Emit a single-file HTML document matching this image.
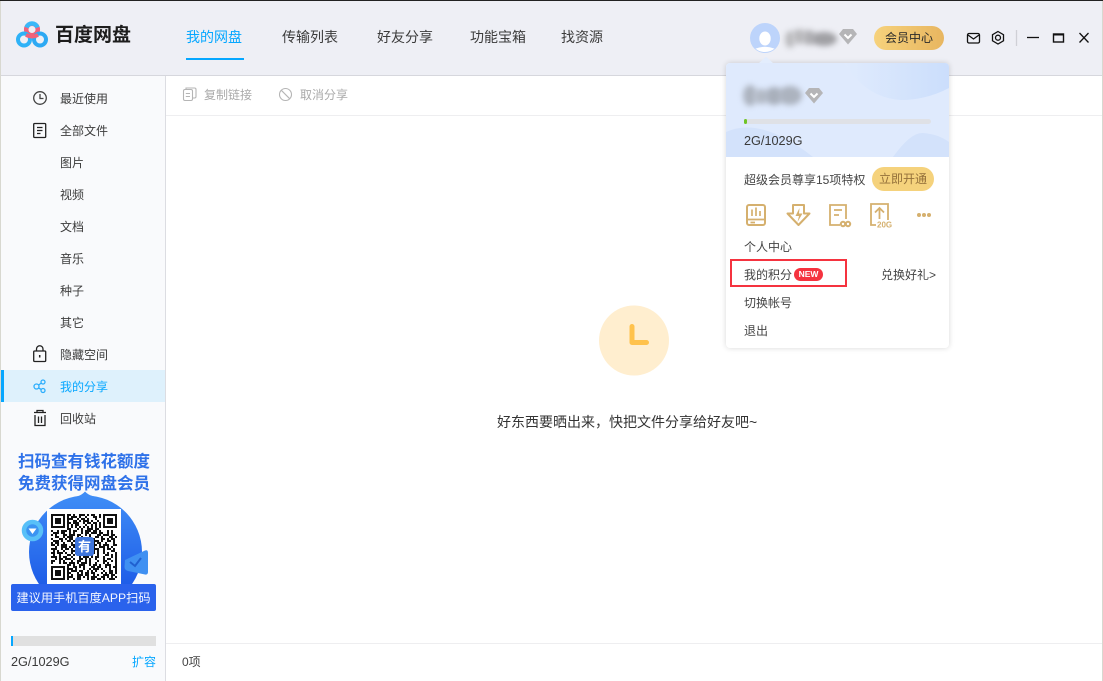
<!DOCTYPE html>
<html lang="zh"><head><meta charset="utf-8"><title>百度网盘</title>
<style>
*{box-sizing:border-box}
html,body{margin:0;padding:0;width:1103px;height:681px;overflow:hidden;background:#d8d8d0}
body{position:relative;font-family:"Liberation Sans","Noto Sans CJK SC",sans-serif;font-size:12px;color:#333}
.a{position:absolute;white-space:nowrap}
.t{position:absolute;white-space:nowrap;line-height:16px}
svg{position:absolute;overflow:visible}
.nav{position:absolute;top:28px;font-size:14px;line-height:18px;color:#3b3b3b;white-space:nowrap}
.side{position:absolute;left:60px;line-height:16px;color:#3c3c3c}
.blur{position:absolute;border-radius:50%;filter:blur(3px)}
</style></head><body>
<div class="a" style="left:1px;top:0;width:1101px;height:681px;background:#fff"></div>
<div class="a" style="left:0;top:0;width:1103px;height:1px;background:#222"></div>
<!-- header -->
<div class="a" style="left:1px;top:1px;width:1101px;height:74px;background:#eeeff5"></div>
<div class="a" style="left:1px;top:75px;width:1101px;height:1px;background:#d6d7dd"></div>
<!-- logo -->
<svg style="left:0;top:0" width="60" height="60" fill="none">
<circle cx="32" cy="29.500" r="5.800" stroke="#f2617a" stroke-width="4.500"/>
<path d="M26.500 27.500A5.800 5.800 0 0 1 37.500 27.500" stroke="#39b8f8" stroke-width="4.500"/>
<circle cx="24" cy="39.500" r="6" stroke="#2eb2f7" stroke-width="4"/>
<circle cx="40" cy="39.500" r="6" stroke="#2da9f3" stroke-width="4"/>
<path d="M26 35Q32 38 38 35" stroke="#f2617a" stroke-width="4"/>
</svg>
<div class="t" style="left:55px;top:24px;font-size:19px;line-height:24px;font-weight:700;color:#1d1d1d">百度网盘</div>
<div class="nav" style="left:186px;color:#06a7ff">我的网盘</div>
<div class="a" style="left:186px;top:58px;width:58px;height:2px;background:#06a7ff"></div>
<div class="nav" style="left:282px">传输列表</div>
<div class="nav" style="left:377px">好友分享</div>
<div class="nav" style="left:470px">功能宝箱</div>
<div class="nav" style="left:561px">找资源</div>
<!-- avatar -->
<svg style="left:750px;top:23px" width="30" height="30" viewBox="0 0 30 30">
<circle cx="15" cy="15" r="15" fill="#bdd4fb"/>
<ellipse cx="15" cy="15.500" rx="5.700" ry="7" fill="#fff"/>
<path d="M5.500 25.600Q15 22 24.500 25.600A15 15 0 0 1 5.500 25.600Z" fill="#fff"/>
</svg>
<div class="blur" style="left:785px;top:31px;width:10px;height:17px;background:#bdbdc0"></div>
<div class="blur" style="left:792px;top:29px;width:14px;height:15px;background:#bcbcbf"></div>
<div class="blur" style="left:802px;top:30px;width:14px;height:15px;background:#b3b3b7"></div>
<div class="blur" style="left:811px;top:32px;width:26px;height:14px;background:#a0a0a4"></div>
<svg style="left:839px;top:29px" width="18" height="16" viewBox="0 0 18 16">
<path d="M4 0H14L18 5 9 15.500 0 5Z" fill="#b5b5b7"/><path d="M5.500 5.500 9 9 12.500 5.500" fill="none" stroke="#fff" stroke-width="2"/>
</svg>
<div class="t" style="left:874px;top:26px;width:70px;height:24px;border-radius:12px;background:linear-gradient(90deg,#f6d27c,#e8b660);text-align:center;line-height:25px;color:#2a2a2a">会员中心</div>
<svg style="left:960px;top:25px" width="140" height="26" fill="none" stroke="#111" stroke-width="1.300">
<rect x="7.500" y="8.500" width="12" height="9.500" rx="1.500"/>
<path d="M8 10 13.500 14 19 10"/>
<path d="M38 6.500 43.500 9.700V15.800L38 19 32.500 15.800V9.700Z"/><circle cx="38" cy="12.700" r="2.500"/>
<path d="M56.500 5V21" stroke="#cfd0d6"/>
<path d="M67 12.500H79"/>
<rect x="93.500" y="9" width="10" height="8" stroke-width="1.400"/><path d="M93.500 9.500H103.500" stroke-width="2"/>
<path d="M119.500 8 128.500 17.500M128.500 8 119.500 17.500"/>
</svg>
<!-- sidebar -->
<div class="a" style="left:1px;top:76px;width:164px;height:605px;background:#f9fafc"></div>
<div class="a" style="left:165px;top:76px;width:1px;height:605px;background:#dcdde2"></div>
<div class="a" style="left:1px;top:370px;width:164px;height:32px;background:#def1fc"></div>
<div class="a" style="left:1px;top:370px;width:3px;height:32px;background:#06a7ff"></div>
<div class="side" style="top:91px">最近使用</div>
<div class="side" style="top:123px">全部文件</div>
<div class="side" style="top:155px">图片</div>
<div class="side" style="top:187px">视频</div>
<div class="side" style="top:219px">文档</div>
<div class="side" style="top:251px">音乐</div>
<div class="side" style="top:283px">种子</div>
<div class="side" style="top:315px">其它</div>
<div class="side" style="top:347px">隐藏空间</div>
<div class="side" style="top:379px;color:#06a7ff">我的分享</div>
<div class="side" style="top:411px">回收站</div>
<svg style="left:0;top:80px" width="60" height="360" fill="none" stroke="#222" stroke-width="1.300">
<circle cx="40" cy="18" r="6.300" stroke="#444"/><path d="M40 14V18.500H43.500" stroke="#444"/>
<rect x="33.700" y="43.500" width="12" height="14" rx="1"/><path d="M37 47.500H42.500M37 50.500H42.500M37 53.500H40.500"/>
<rect x="33.700" y="271" width="12" height="10.500" rx="1"/><path d="M36.500 271V269A3.200 3.200 0 0 1 43 269V271"/><path d="M39.700 275V277.500" stroke-width="1.500"/>
<g stroke="#2daefc"><circle cx="36.500" cy="306.500" r="2.500"/><circle cx="43" cy="302" r="2"/><circle cx="43" cy="310.500" r="2"/><path d="M38.700 305 41.300 303M38.700 308 41.300 309.500"/></g>
<path d="M34 332.500H46M37 332.500V330.500H43V332.500M35 335V345.500H45V335M38.500 336.500V343M41.500 336.500V343"/>
</svg>
<!-- promo -->
<div class="t" style="left:17px;top:452px;width:134px;text-align:center;font-size:16.500px;line-height:21px;font-weight:700;color:#2f72e9">扫码查有钱花额度</div>
<div class="t" style="left:17px;top:474px;width:134px;text-align:center;font-size:16.500px;line-height:21px;font-weight:700;color:#2f72e9">免费获得网盘会员</div>
<svg style="left:0;top:490px" width="166" height="100">
<defs><linearGradient id="g" x1="0" y1="0" x2="0" y2="1"><stop offset="0" stop-color="#3f8df6"/><stop offset="1" stop-color="#1650e4"/></linearGradient>
<clipPath id="c"><rect x="0" y="0" width="166" height="95"/></clipPath></defs>
<g clip-path="url(#c)"><circle cx="85.500" cy="62" r="56.500" fill="url(#g)"/>
<path d="M77 6.500Q82 5 85 1.500Q88 5 94 6.500Z" fill="#3f8df6"/></g>
<circle cx="32.500" cy="40.500" r="8.500" fill="#3b94f2" stroke="#58c0f8" stroke-width="4.500"/><path d="M28.500 38.500H36.500L32.500 44Z" fill="#fff"/>
<path d="M125 70 145 60.500Q148 59.500 148 63V82Q148 85 145 84.500L128 81Q124.500 80 124.500 77Z" fill="#3f90f2"/>
<path d="M130 72 135 76 141 68" fill="none" stroke="#2060d0" stroke-width="2"/>
</svg>
<div class="a" style="left:47px;top:509px;width:74px;height:76px;background:#fff"></div>
<svg style="left:51px;top:514px" width="66" height="66" viewBox="0 0 33 33" shape-rendering="crispEdges">
<g fill="none" stroke="#111" stroke-width="1">
<path stroke-dasharray="2 1 1 2 3 1 1 1 2 2 1 3" d="M8 .5H25"/>
<path stroke-dasharray="1 1 3 1 1 2 1 3 2 1" d="M8 1.500H25"/>
<path stroke-dasharray="3 2 1 1 2 1 1 3 1" d="M8 2.500H25"/>
<path stroke-dasharray="1 2 2 1 1 1 3 1 1 2" d="M8 3.500H25"/>
<path stroke-dasharray="2 1 3 2 1 1 2 1" d="M8 4.500H25"/>
<path stroke-dasharray="1 1 1 1 2 3 1 2 1 1" d="M8 5.500H25"/>
<path stroke-dasharray="1 1 1 1 1 1 1 1 1 1 1" d="M8 6.500H25"/>
<path stroke-dasharray="2 3 1 1 1 2 3 1" d="M8 7.500H25"/>
<path stroke-dasharray="1 2 1 1 3 1 1 1 2 2 1 1 3" d="M0 8.500H33"/>
<path stroke-dasharray="3 1 2 2 1 1 1 3 1 1 2 1" d="M1 9.500H33"/>
<path stroke-dasharray="1 1 1 3 2 1 3 1 2 2" d="M0 10.500H33"/>
<path stroke-dasharray="2 2 1 1 3 2 1 1 1 3 1" d="M2 11.500H33"/>
<path stroke-dasharray="1 3 2 1 1 1 2 3 1 1 3 2" d="M0 12.500H12M21 12.500H33"/>
<path stroke-dasharray="3 1 1 2 2 1 1" d="M1 13.500H12M21 13.500H33"/>
<path stroke-dasharray="1 1 2 2 1 3 1" d="M0 14.500H12M21 14.500H33"/>
<path stroke-dasharray="2 1 1 1 3 2 2" d="M0 15.500H12M21 15.500H33"/>
<path stroke-dasharray="1 2 3 1 1 1" d="M2 16.500H12M21 16.500H33"/>
<path stroke-dasharray="3 2 1 1 2 1 1 1" d="M0 17.500H12M21 17.500H33"/>
<path stroke-dasharray="1 1 1 2 1 3 2" d="M1 18.500H12M21 18.500H33"/>
<path stroke-dasharray="2 1 3 1 1 2 1 1 1 3" d="M0 19.500H33"/>
<path stroke-dasharray="1 2 1 3 2 1 1 1 3 1 1 2" d="M1 20.500H33"/>
<path stroke-dasharray="3 1 1 1 2 2 1 3 1 1" d="M0 21.500H33"/>
<path stroke-dasharray="1 1 2 1 3 1 1 2 2 1 1" d="M2 22.500H33"/>
<path stroke-dasharray="2 2 1 1 1 3 1 2" d="M0 23.500H33"/>
<path stroke-dasharray="1 3 1 1 2 1 3 1 1" d="M0 24.500H33"/>
<path stroke-dasharray="2 1 1 2 3 2 1 1" d="M8 25.500H33"/>
<path stroke-dasharray="1 2 2 1 1 1 1 3 2" d="M8 26.500H33"/>
<path stroke-dasharray="3 1 1 3 1 2 1 1" d="M8 27.500H33"/>
<path stroke-dasharray="1 1 3 1 2 2 1 1 1" d="M8 28.500H33"/>
<path stroke-dasharray="2 3 1 1 1 1 2 1" d="M8 29.500H33"/>
<path stroke-dasharray="1 1 1 2 3 1 2 2" d="M8 30.500H33"/>
<path stroke-dasharray="3 2 2 1 1 1 1 1" d="M8 31.500H33"/>
<path stroke-dasharray="1 2 1 1 2 3 1 1 2" d="M8 32.500H33"/>
</g>
<g fill="#fff"><rect x="0" y="0" width="8" height="8"/><rect x="25" y="0" width="8" height="8"/><rect x="0" y="25" width="8" height="8"/></g>
<g fill="none" stroke="#111"><rect x=".5" y=".5" width="6" height="6"/><rect x="26.500" y=".5" width="6" height="6"/><rect x=".5" y="26.500" width="6" height="6"/></g>
<g fill="#111"><rect x="2" y="2" width="3" height="3"/><rect x="28" y="2" width="3" height="3"/><rect x="2" y="28" width="3" height="3"/></g>
</svg>
<div class="t" style="left:75px;top:537px;width:19px;height:19px;border-radius:3px;background:#3f76dd;color:#fff;font-weight:700;font-size:13px;line-height:19px;text-align:center">有</div>
<div class="t" style="left:11px;top:584px;width:145px;height:27px;border-radius:2px;background:#2a62ec;color:#f4f7ff;text-align:center;line-height:28px;font-size:12.200px">建议用手机百度APP扫码</div>
<!-- quota -->
<div class="a" style="left:11px;top:636px;width:145px;height:10px;background:#e0e0e0"></div>
<div class="a" style="left:11px;top:636px;width:2px;height:10px;background:#06a7ff"></div>
<div class="t" style="left:11px;top:654px;color:#3a3a3a;font-size:12.700px">2G/1029G</div>
<div class="t" style="left:132px;top:654px;color:#06a7ff">扩容</div>
<!-- toolbar -->
<div class="a" style="left:166px;top:115px;width:936px;height:1px;background:#eeeef0"></div>
<svg style="left:180px;top:85px" width="120" height="20" fill="none" stroke="#b5b5b5" stroke-width="1.100">
<rect x="3.500" y="4.500" width="9" height="11" rx="1.500"/><path d="M6 4.500V3H14.500A1.500 1.500 0 0 1 16 4.500V11.500A1.500 1.500 0 0 1 14.500 13H12.500M5.800 8.500H10M5.800 11.500H10"/>
<circle cx="105.500" cy="9.500" r="6"/><path d="M101.200 5.200 109.800 13.800"/>
</svg>
<div class="t" style="left:204px;top:87px;color:#aaa">复制链接</div>
<div class="t" style="left:300px;top:87px;color:#aaa">取消分享</div>
<!-- center -->
<svg style="left:599px;top:305px" width="70" height="71">
<circle cx="35" cy="35.500" r="35" fill="#ffeecf"/>
<path d="M33 21.500V37.500H47.500" fill="none" stroke="#ffc24d" stroke-width="5" stroke-linecap="round" stroke-linejoin="round"/>
</svg>
<div class="t" style="left:497px;top:414px;font-size:14px;color:#333">好东西要晒出来，快把文件分享给好友吧~</div>
<!-- footer -->
<div class="a" style="left:166px;top:643px;width:936px;height:1px;background:#eeeef0"></div>
<div class="t" style="left:182px;top:654px;color:#444">0项</div>
<!-- popup -->
<div class="a" style="left:726px;top:63px;width:223px;height:285px;background:#fff;border-radius:4px;box-shadow:0 0 6px rgba(0,0,0,.16)"></div>
<svg style="left:726px;top:56px" width="223" height="102" viewBox="0 0 223 102">
<defs><linearGradient id="h" x1="0" y1="0" x2="1" y2="0"><stop offset="0" stop-color="#e0ebfd"/><stop offset="1" stop-color="#cbdefc"/></linearGradient></defs>
<path d="M32 8 39 1.500Q40 .5 41 1.500L48 8Z" fill="#e3edfd"/>
<path d="M0 11A4 4 0 0 1 4 7H219A4 4 0 0 1 223 11V101H0Z" fill="#dfeafd"/>
<path d="M118 7H219A4 4 0 0 1 223 11V32Q200 44 175 44Q140 42 118 7Z" fill="url(#h)"/>
<path d="M0 76Q35 60 87 101H0Z" fill="#d3e2fb"/>
<path d="M167 101Q185 76 197 77Q212 78 223 86V101Z" fill="#d3e2fb"/>
</svg>
<div class="blur" style="left:743px;top:85px;width:14px;height:21px;background:#adb4c0"></div>
<div class="blur" style="left:753px;top:89px;width:16px;height:15px;background:#b4bbc7"></div>
<div class="blur" style="left:765px;top:87px;width:18px;height:18px;background:#a9b0bc"></div>
<div class="blur" style="left:778px;top:86px;width:24px;height:19px;background:#acb3bf"></div>
<svg style="left:805px;top:88px" width="18" height="16" viewBox="0 0 18 16">
<path d="M4 0H14L18 5 9 15.500 0 5Z" fill="#b5b5b7"/><path d="M5.500 5.500 9 9 12.500 5.500" fill="none" stroke="#fff" stroke-width="2"/>
</svg>
<div class="a" style="left:744px;top:119px;width:187px;height:5px;border-radius:3px;background:#dfe1e6"></div>
<div class="a" style="left:744px;top:119px;width:3px;height:5px;border-radius:2px;background:#6fc425"></div>
<div class="t" style="left:744px;top:133px;color:#3a3a3a;font-size:12.700px">2G/1029G</div>
<div class="t" style="left:744px;top:172px;color:#444">超级会员尊享15项特权</div>
<div class="t" style="left:872px;top:167px;width:62px;height:24px;border-radius:12px;background:#f5d27c;text-align:center;line-height:24px;color:#94703a">立即开通</div>
<svg style="left:735px;top:195px" width="205" height="40" fill="none" stroke="#d5b06e" stroke-width="2">
<rect x="12" y="10" width="18" height="20" rx="2"/><path d="M12 24.500H30M15.500 27.500H20M17 14.500V21M21 12.500V21M25 16V21" stroke-width="1.700"/>
<path d="M58 10H69V18.500H74.500L63.500 30 52.500 18.500H58Z" stroke-linejoin="round"/>
<path d="M64.500 13 60.500 21H64L62.500 27 67.500 18.500H64Z" fill="#d5b06e" stroke="none"/>
<path d="M105 30H95V10H111V24M99 15H107M99 20H104" stroke-width="1.800"/>
<path d="M141 30H136V9H153V25M144.500 24V13.500M140 17.500 144.500 13 149 17.500" stroke-width="1.800"/>
<circle cx="184" cy="20" r="2" fill="#d5b06e" stroke="none"/><circle cx="189" cy="20" r="2" fill="#d5b06e" stroke="none"/><circle cx="194" cy="20" r="2" fill="#d5b06e" stroke="none"/>
<circle cx="108" cy="29" r="2.200"/><circle cx="113" cy="29" r="2.200"/>
<text x="142" y="32.500" font-family="Liberation Sans" font-size="8" font-weight="700" fill="#d5b06e" stroke="none">20G</text>
</svg>
<div class="t" style="left:744px;top:239px;color:#444">个人中心</div>
<div class="t" style="left:744px;top:267px;color:#444">我的积分</div>
<div class="t" style="left:794px;top:268px;width:29px;height:13px;border-radius:7px;background:#f5333f;color:#fff;font-size:8.500px;font-weight:700;line-height:13px;text-align:center">NEW</div>
<div class="t" style="left:881px;top:267px;color:#444">兑换好礼&gt;</div>
<div class="t" style="left:744px;top:295px;color:#444">切换帐号</div>
<div class="t" style="left:744px;top:323px;color:#444">退出</div>
<div class="a" style="left:730px;top:259px;width:117px;height:28px;border:2px solid #f5333f"></div>
</body></html>
